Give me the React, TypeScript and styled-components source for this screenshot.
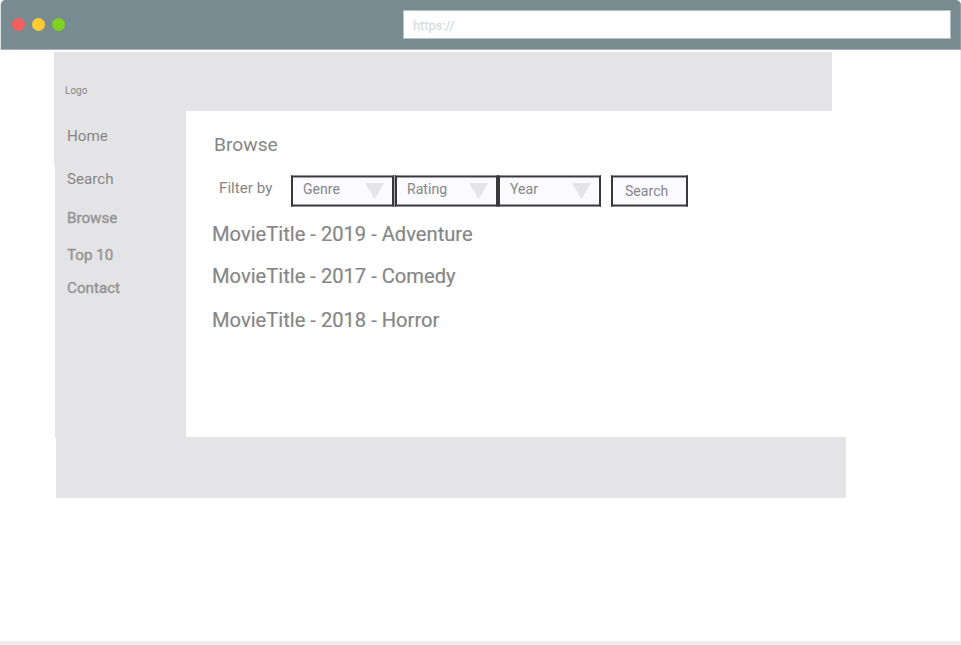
import React from "react";
import styled, { createGlobalStyle } from "styled-components";

const GlobalStyle = createGlobalStyle`
  *, *::before, *::after { box-sizing: border-box; }
  body { margin: 0; background: #fff; font-family: Roboto, "Liberation Sans", sans-serif; color: #868686; }
  h1, ul, p { margin: 0; padding: 0; font-weight: 400; }
`;

const Browser = styled.div`
  width: 961px;
  height: 645px;
  display: flex;
  flex-direction: column;
  overflow: hidden;
`;

const TitleBar = styled.header`
  flex: none;
  height: 50px;
  display: flex;
  align-items: flex-start;
  justify-content: space-between;
  padding: 10px 9px 0 11px;
  background: #788b90;
  border-left: 1px solid #dfe5e6;
  border-right: 1px solid #90a0a4;
  border-bottom: 1px solid #a9b5b8;
  border-radius: 5px 5px 0 0;
`;

const Lights = styled.div`
  display: flex;
  gap: 7px;
  padding-top: 8px;
`;

const Light = styled.span<{ $color: string }>`
  width: 13px;
  height: 13px;
  border-radius: 50%;
  background: ${(p) => p.$color};
`;

const AddressBar = styled.div`
  width: 548px;
  height: 29px;
  padding-left: 9px;
  border: 1px solid #b5c0c3;
  background: #fff;
  font-size: 12.8px;
  line-height: 29px;
  -webkit-text-stroke: 0.3px #d6dee0;
  color: #d6dee0;
`;

const Viewport = styled.main`
  flex: 1;
  padding: 2px 0 0 54px;
  border-right: 1px solid #ececec;
  border-bottom: 4px solid #ededed;
`;

const Banner = styled.div`
  width: 778px;
  height: 59px;
  padding: 32px 0 0 11px;
  background: #e4e4e6;
  font-size: 10px;
  line-height: 14px;
`;

const Middle = styled.div`
  display: flex;
  height: 326px;
`;

const Sidebar = styled.nav`
  width: 132px;
  display: flex;
  flex-direction: column;
`;

const SidebarTop = styled.ul`
  height: 54px;
  padding: 15px 0 0 13px;
  background: #e4e4e6;
  list-style: none;
`;

const SidebarRest = styled.ul`
  flex: 1;
  margin-left: 1px;
  padding: 4px 0 0 12px;
  background: #e4e4e6;
  list-style: none;
`;

const NavItem = styled.li<{ $gap?: number; $soft?: boolean }>`
  height: 20px;
  margin-bottom: ${(p) => p.$gap ?? 0}px;
  font-size: 15.2px;
  line-height: 20px;
  color: ${(p) => (p.$soft ? "#949494" : "#868686")};
  -webkit-text-stroke: ${(p) => (p.$soft ? "0.4px #949494" : "0")};
`;

const Content = styled.section`
  flex: 1;
  padding: 21px 0 0 26px;
`;

const Heading = styled.h1`
  margin-left: 2px;
  font-size: 19.2px;
  line-height: 25px;
`;

const Filters = styled.form`
  display: flex;
  align-items: flex-start;
  margin-top: 18px;
  padding-left: 7px;
`;

const FilterLabel = styled.span`
  width: 72px;
  font-size: 15.2px;
  line-height: 26px;
`;

const Control = styled.button<{ $width: number; $divided?: boolean }>`
  width: ${(p) => p.$width}px;
  height: 32px;
  display: flex;
  align-items: flex-start;
  justify-content: space-between;
  margin: 0 ${(p) => (p.$divided ? 1 : 0)}px 0 0;
  padding: 1px 8px 0 10px;
  border: solid #39393c;
  border-width: 1px 2px;
  border-top-color: #929294;
  border-bottom-color: #929294;
  border-radius: 0;
  box-shadow:
    inset 0 1px #39393c,
    inset 0 -1px #39393c,
    inset 0 2px #a0a0a4,
    inset 0 -2px #a0a0a4
    ${(p) => (p.$divided ? ", 1px 0 #a8a8aa" : "")};
  background: #fafaff;
  color: #868686;
  font: 400 14.1px/24px Roboto, "Liberation Sans", sans-serif;
`;

const SearchButton = styled(Control)`
  margin-left: 10px;
  padding: 3px 0 0 12px;
`;

const Arrow = styled.svg`
  width: 19px;
  height: 16px;
  margin-top: 6px;
  fill: #e4e4e6;
`;

const Movies = styled.ul`
  list-style: none;
  margin-top: 14px;
`;

const Movie = styled.li<{ $gap: number }>`
  height: 26px;
  margin-bottom: ${(p) => p.$gap}px;
  font-size: 20.15px;
  line-height: 26px;
  -webkit-text-stroke: 0.2px #868686;
`;

const Footer = styled.footer`
  width: 790px;
  height: 61px;
  margin-left: 2px;
  background: #e4e4e6;
`;

const filters = [
  { name: "Genre", width: 103, divided: true },
  { name: "Rating", width: 103 },
  { name: "Year", width: 103 },
];

const movies = [
  { text: "MovieTitle - 2019 - Adventure", gap: 16 },
  { text: "MovieTitle - 2017 - Comedy", gap: 18 },
  { text: "MovieTitle - 2018 - Horror", gap: 0 },
];

export default function App() {
  return (
    <Browser>
      <GlobalStyle />
      <TitleBar>
        <Lights>
          <Light $color="#f55e5e" />
          <Light $color="#ffcb2f" />
          <Light $color="#7ed321" />
        </Lights>
        <AddressBar>https://</AddressBar>
      </TitleBar>
      <Viewport>
        <Banner>Logo</Banner>
        <Middle>
          <Sidebar>
            <SidebarTop>
              <NavItem>Home</NavItem>
            </SidebarTop>
            <SidebarRest>
              <NavItem $gap={19}>Search</NavItem>
              <NavItem $gap={17} $soft>Browse</NavItem>
              <NavItem $gap={13} $soft>Top 10</NavItem>
              <NavItem $soft>Contact</NavItem>
            </SidebarRest>
          </Sidebar>
          <Content>
            <Heading>Browse</Heading>
            <Filters>
              <FilterLabel>Filter by</FilterLabel>
              {filters.map((f) => (
                <Control key={f.name} type="button" $width={f.width} $divided={f.divided}>
                  {f.name}
                  <Arrow viewBox="0 0 19 16">
                    <path d="M0 0H19L9.5 16Z" />
                  </Arrow>
                </Control>
              ))}
              <SearchButton type="button" $width={77}>Search</SearchButton>
            </Filters>
            <Movies>
              {movies.map((m) => (
                <Movie key={m.text} $gap={m.gap}>{m.text}</Movie>
              ))}
            </Movies>
          </Content>
        </Middle>
        <Footer />
      </Viewport>
    </Browser>
  );
}
